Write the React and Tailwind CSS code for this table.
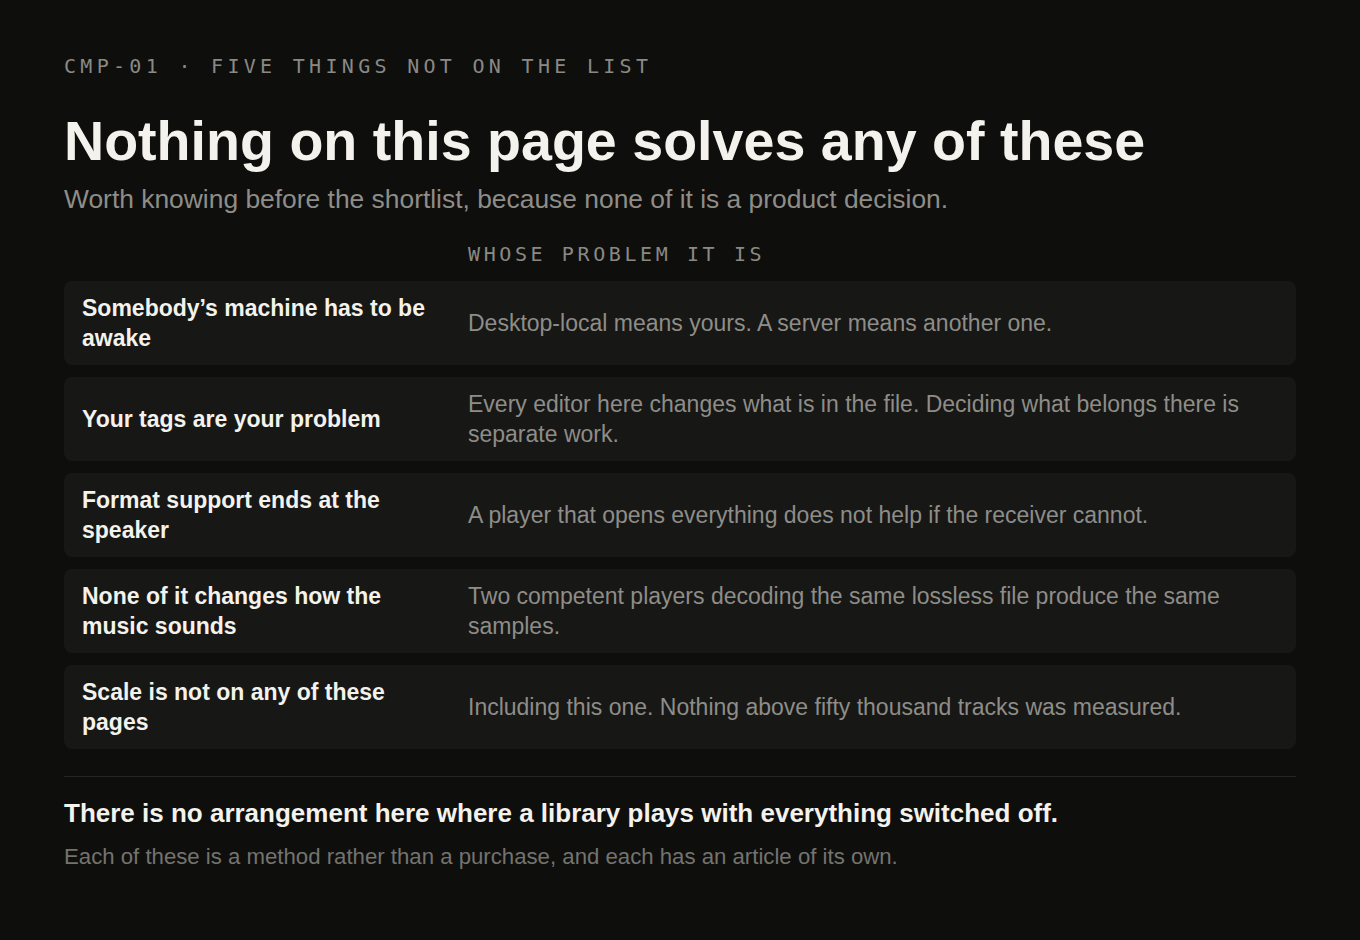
const rows = [
  {
    title: "Somebody’s machine has to be awake",
    note: "Desktop-local means yours. A server means another one.",
  },
  {
    title: "Your tags are your problem",
    note: "Every editor here changes what is in the file. Deciding what belongs there is separate work.",
  },
  {
    title: "Format support ends at the speaker",
    note: "A player that opens everything does not help if the receiver cannot.",
  },
  {
    title: "None of it changes how the music sounds",
    note: "Two competent players decoding the same lossless file produce the same samples.",
  },
  {
    title: "Scale is not on any of these pages",
    note: "Including this one. Nothing above fifty thousand tracks was measured.",
  },
];

export default function App() {
  return (
    <div className="min-h-[940px] bg-[#0e0e0d] px-16 pt-[52px] pb-16 font-['Liberation_Sans',Arial,sans-serif]">
      <div className="font-['DejaVu_Sans_Mono',monospace] text-[20px] leading-7 tracking-[0.215em] text-[#8a8984]">
        CMP-01 · FIVE THINGS NOT ON THE LIST
      </div>

      <h1 className="mt-[29px] text-[55.6px] font-bold leading-[64px] text-[#f3f2ec]">
        Nothing on this page solves any of these
      </h1>
      <p className="mt-[10px] text-[26.4px] leading-8 text-[#8e8d88]">
        Worth knowing before the shortlist, because none of it is a product decision.
      </p>

      <div className="mt-[25px] grid grid-cols-[368px_1fr] gap-x-[18px] px-[18px]">
        <div />
        <div className="font-['DejaVu_Sans_Mono',monospace] text-[20px] leading-7 tracking-[0.18em] text-[#8a8984]">
          WHOSE PROBLEM IT IS
        </div>
      </div>

      <div className="mt-[13px] flex flex-col gap-3">
        {rows.map((row) => (
          <div
            key={row.title}
            className="grid h-[84px] grid-cols-[368px_1fr] items-center gap-x-[18px] rounded-lg bg-[#171716] px-[18px]"
          >
            <div className="text-[23px] font-bold leading-[30px] text-[#f3f2ec]">
              {row.title}
            </div>
            <div className="text-[23px] leading-[30px] text-[#8e8d88]">
              {row.note}
            </div>
          </div>
        ))}
      </div>

      <div className="mt-[27px] h-px bg-[#262624]" />

      <p className="mt-[20px] text-[26px] font-bold leading-8 text-[#f3f2ec]">
        There is no arrangement here where a library plays with everything switched off.
      </p>
      <p className="mt-[14px] text-[22.2px] leading-7 text-[#74736e]">
        Each of these is a method rather than a purchase, and each has an article of its own.
      </p>
    </div>
  );
}
